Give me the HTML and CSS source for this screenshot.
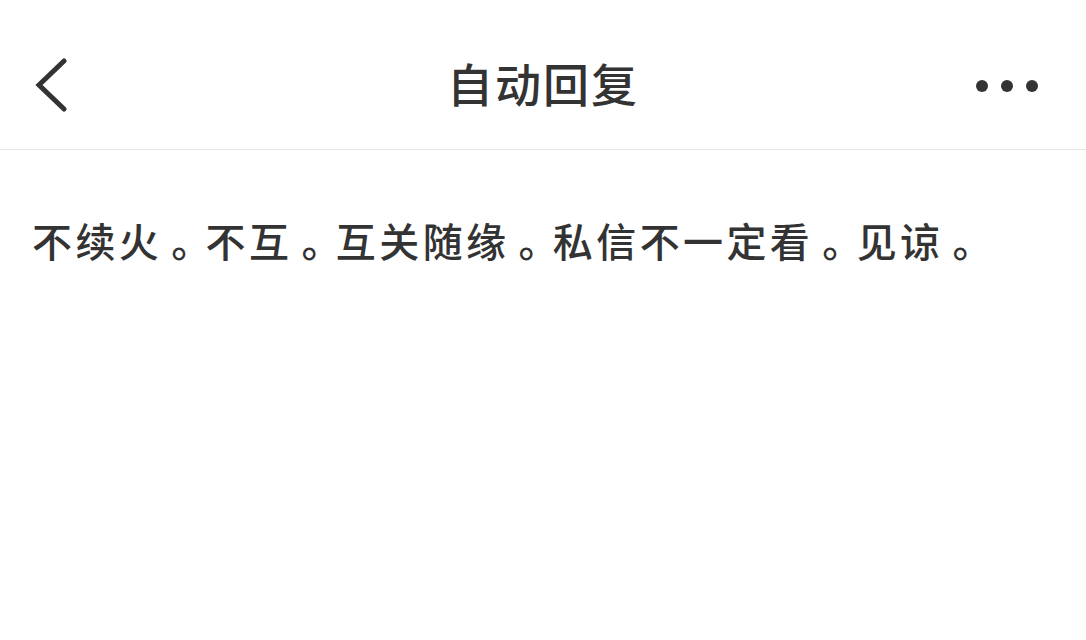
FILE: index.html
```html
<!DOCTYPE html>
<html lang="zh-CN">
<head>
  <meta charset="utf-8" />
  <meta name="viewport" content="width=device-width, initial-scale=1" />
  <title>自动回复</title>
  <link rel="stylesheet" href="styles.css">
</head>
<body>
  <header class="nav-bar">
    <div class="nav-row">
      <button class="nav-back" aria-label="返回">
        <svg width="36" height="56" viewBox="0 0 36 56">
          <path d="M30 3 L5 27 L30 51" fill="none" stroke="#333" stroke-width="5" stroke-linecap="round" stroke-linejoin="miter" />
        </svg>
      </button>
      <h1 class="nav-title">自动回复</h1>
      <button class="nav-more" aria-label="更多">
        <span class="dot"></span>
        <span class="dot"></span>
        <span class="dot"></span>
      </button>
    </div>
  </header>

  <main class="reply-content">
    <p class="reply-text">不续火<span class="stop">。</span>不互<span class="stop">。</span>互关随缘<span class="stop">。</span>私信不一定看<span class="stop">。</span>见谅<span class="stop">。</span></p>
  </main>
</body>
</html>
```

FILE: styles.css
```css
body {
  font-family: "Noto Sans CJK SC", "Noto Sans", sans-serif;
  background-color: #fff;
  color: #333;
  margin: 0;
  padding: 0;
}

.nav-bar {
  height: 150px;
  box-sizing: border-box;
  padding-top: 58px;
  border-bottom: 1px solid #e6e6e6;
}

.nav-row {
  height: 48px;
  display: grid;
  grid-template-columns: 120px 1fr 120px;
  align-items: center;
}

.nav-back,
.nav-more {
  background: none;
  border: none;
  padding: 0;
  cursor: pointer;
  display: flex;
  align-items: center;
}

.nav-back {
  padding-left: 34px;
}

.nav-back svg {
  display: block;
}

.nav-title {
  margin: 0 0 8px;
  text-align: center;
  font-size: 46px;
  line-height: 48px;
  font-weight: 500;
  letter-spacing: 2px;
  color: #333;
}

.nav-more {
  justify-content: flex-end;
  gap: 13px;
  padding-right: 48px;
}

.dot {
  width: 12px;
  height: 12px;
  border-radius: 50%;
  background-color: #333;
}

.reply-content {
  padding: 66px 32px;
}

.reply-text {
  margin: 0;
  font-size: 40px;
  line-height: 48px;
  font-weight: 500;
  letter-spacing: 3.4px;
  color: #333;
}

/* full stops sit in the middle of their cell */
.stop {
  margin-left: 9px;
  letter-spacing: -5.6px;
}
```
